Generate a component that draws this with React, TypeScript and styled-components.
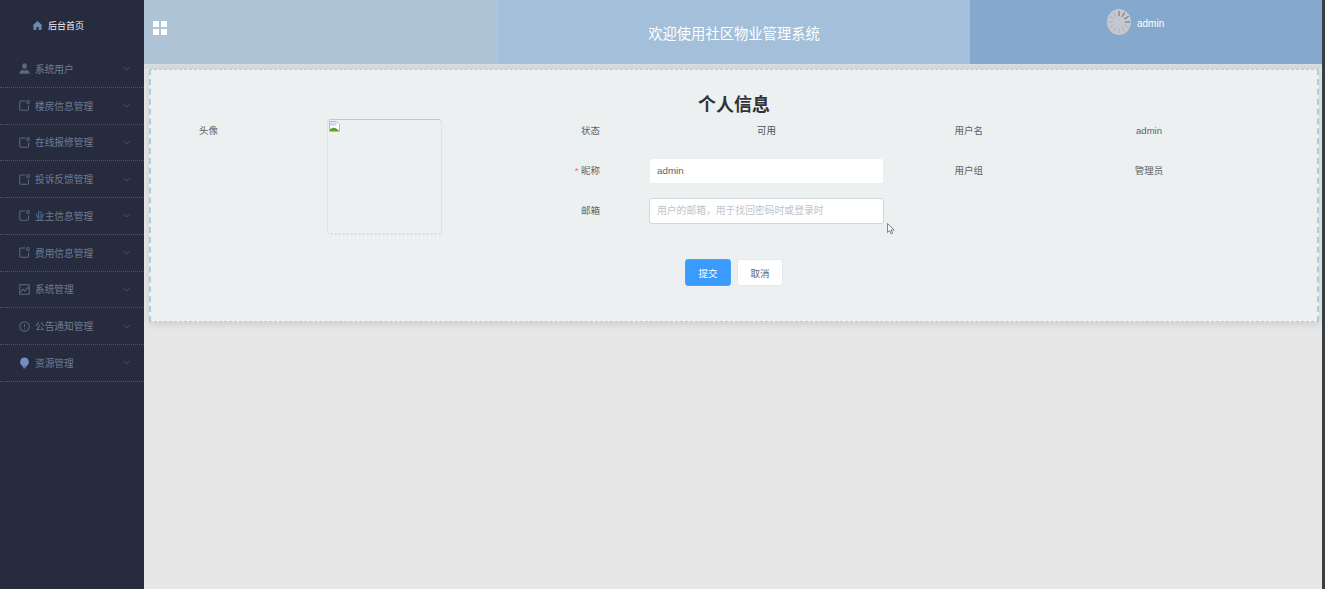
import styled, { createGlobalStyle } from "styled-components";

const GlobalStyle = createGlobalStyle`
    html, body {
        margin: 0;
        padding: 0;
        height: 100%;
        background-color: #3a3d42;
        font-family: "Liberation Sans", "Noto Sans CJK SC", sans-serif;
    }
    #root {
        height: 100%;
    }
`;

const NewsIcon = () => (
    <svg width="11" height="11" viewBox="0 0 15 15" fill="none" stroke="currentColor" strokeWidth="1.4">
        <path d="M8.500 1.500H2.500a1.500 1.500 0 0 0-1.500 1.500v9.500a1.500 1.500 0 0 0 1.500 1.500h9a1.500 1.500 0 0 0 1.500-1.500V7" />
        <circle cx="12.300" cy="2.700" r="1.900" />
    </svg>
);

const UserIcon = () => (
    <svg width="11" height="11" viewBox="0 0 15 15" fill="currentColor">
        <path d="M7.500.5c2.100 0 3.300 1.500 3.300 3.500 0 2.100-1.300 4-3.300 4s-3.300-1.900-3.300-4c0-2 1.200-3.500 3.300-3.500z" />
        <path d="M.5 14.500c0-3 1.900-4.700 4.500-5.400l2.500 1.500 2.500-1.500c2.600.7 4.500 2.400 4.500 5.400z" />
    </svg>
);

const PictureIcon = () => (
    <svg width="11" height="11" viewBox="0 0 15 15" fill="none" stroke="currentColor" strokeWidth="1.4">
        <rect x="1" y="1" width="13" height="13" />
        <path d="M1.500 11.500l4-4.500 2.500 2.500 4-5 1.500 2" />
    </svg>
);

const InfoIcon = () => (
    <svg width="11" height="11" viewBox="0 0 15 15" fill="none" stroke="currentColor" strokeWidth="1.4">
        <circle cx="7.500" cy="7.500" r="6.500" />
        <path d="M7.500 4v4.500M7.500 10v1.200" />
    </svg>
);

const BulbIcon = () => (
    <svg width="11" height="12" viewBox="0 0 15 16" fill="#7390c4">
        <path d="M7.500.5a6 6 0 0 1 3.200 11l-.5 1.500H4.800l-.5-1.500A6 6 0 0 1 7.500.5z" />
        <rect x="5.300" y="13.800" width="4.400" height="1.500" rx="0.600" />
    </svg>
);

const HomeIcon = () => (
    <svg width="11" height="11" viewBox="0 0 11 11" fill="currentColor">
        <path d="M5.500 1L10.500 5.500 9.500 5.800V10H6.600V7H4.400v3H1.500V5.800L.5 5.500z" />
    </svg>
);

const Chevron = () => (
    <svg width="7" height="5" viewBox="0 0 7 5" fill="none" stroke="currentColor" strokeWidth="0.700">
        <path d="M0.500 1l3 3 3-3" />
    </svg>
);

const Spinner = () => (
    <svg width="24" height="26" viewBox="0 0 24 26">
        <ellipse cx="12" cy="13" rx="12" ry="13" fill="#c5c8d0" />
        {Array.from({ length: 12 }).map((_, i) => (
            <line
                key={i}
                x1="12"
                y1="2"
                x2="12"
                y2="7"
                stroke={i < 4 ? "#55575c" : "#a8aab0"}
                strokeWidth="0.800"
                transform={`rotate(${i * 30} 12 13)`}
            />
        ))}
    </svg>
);

const BrokenImage = () => (
    <svg width="11" height="11" viewBox="0 0 11 11">
        <path d="M.5.5h7l3 3v7h-10z" fill="#ffffff" stroke="#a6a9ad" strokeWidth="0.800" />
        <path d="M1 4.500h6.500v-3H1z" fill="#c6daf4" />
        <path d="M1 10V8.500c2-2.200 4.500-2.500 7-.5l2 1.800V10z" fill="#5aa02c" />
    </svg>
);

const Cursor = () => (
    <svg width="9" height="12" viewBox="0 0 9 12">
        <path d="M.500.500v9l2.200-2 1.500 3.500 1.500-.700-1.500-3.300h3z" fill="#f4f6f6" stroke="#55585c" strokeWidth="0.700" />
    </svg>
);

const menus = [
    { label: "系统用户", icon: <UserIcon /> },
    { label: "楼房信息管理", icon: <NewsIcon /> },
    { label: "在线报修管理", icon: <NewsIcon /> },
    { label: "投诉反馈管理", icon: <NewsIcon /> },
    { label: "业主信息管理", icon: <NewsIcon /> },
    { label: "费用信息管理", icon: <NewsIcon /> },
    { label: "系统管理", icon: <PictureIcon /> },
    { label: "公告通知管理", icon: <InfoIcon /> },
    { label: "资源管理", icon: <BulbIcon /> },
];

export default function App() {
    return (
        <>
            <GlobalStyle />
            <Page>
                <Sidebar>
                    <HomeLink>
                        <HomeIcon />
                        <span>后台首页</span>
                    </HomeLink>
                    {menus.map((menu) => (
                        <MenuItem key={menu.label}>
                            <MenuIcon>{menu.icon}</MenuIcon>
                            <MenuLabel>{menu.label}</MenuLabel>
                            <Chevron />
                        </MenuItem>
                    ))}
                </Sidebar>
                <Main>
                    <Header>
                        <HeaderLeft>
                            <GridButton>
                                <i />
                                <i />
                                <i />
                                <i />
                            </GridButton>
                        </HeaderLeft>
                        <HeaderCenter>欢迎使用社区物业管理系统</HeaderCenter>
                        <HeaderRight>
                            <Spinner />
                            <span>admin</span>
                        </HeaderRight>
                    </Header>
                    <Content>
                        <Card>
                            <Title>个人信息</Title>
                            <FormGrid>
                                <Label>头像</Label>
                                <Avatar>
                                    <BrokenImage />
                                </Avatar>
                                <FieldLabel>状态</FieldLabel>
                                <Value>可用</Value>
                                <SideLabel>用户名</SideLabel>
                                <SideValue>admin</SideValue>

                                <FieldLabel>
                                    <Required>*</Required> 昵称
                                </FieldLabel>
                                <Control>
                                    <Input defaultValue="admin" />
                                </Control>
                                <SideLabel>用户组</SideLabel>
                                <SideValue>管理员</SideValue>

                                <FieldLabel>邮箱</FieldLabel>
                                <Control>
                                    <Input $outlined placeholder="用户的邮箱，用于找回密码时或登录时" />
                                    <CursorMark>
                                        <Cursor />
                                    </CursorMark>
                                </Control>
                            </FormGrid>
                            <Actions>
                                <Button $primary>提交</Button>
                                <Button>取消</Button>
                            </Actions>
                        </Card>
                    </Content>
                </Main>
            </Page>
        </>
    );
}

const Page = styled.div`
    display: flex;
    width: 1322px;
    height: 589px;
    overflow: hidden;
`;

const Sidebar = styled.aside`
    flex: 0 0 144px;
    background-color: #262b3d;
`;

const HomeLink = styled.div`
    display: flex;
    align-items: center;
    gap: 5px;
    height: 50px;
    margin-bottom: 1px;
    padding-left: 32px;
    box-sizing: border-box;
    font-size: 9px;
    color: #f2f4f8;

    svg {
        color: #6f88ad;
    }
`;

const MenuItem = styled.div`
    display: flex;
    align-items: center;
    height: 36.75px;
    box-sizing: border-box;
    padding: 0 14px 0 19px;
    border-bottom: 1px dotted #51555f;
    color: #7288ac;

    svg:last-child {
        color: #586881;
    }
`;

const MenuIcon = styled.span`
    display: flex;
    width: 16px;
`;

const MenuLabel = styled.span`
    flex: 1;
    font-size: 9.7px;
    color: #6d7f98;
`;

const Main = styled.main`
    flex: 1;
    display: flex;
    flex-direction: column;
    background-color: #e7e7e8;
`;

const Header = styled.header`
    display: flex;
    height: 64px;
    color: #ffffff;
`;

const HeaderLeft = styled.div`
    flex: 0 0 354px;
    background-color: #b0c4d7;
    box-sizing: border-box;
    padding: 21px 0 0 9px;
`;

const GridButton = styled.div`
    display: grid;
    grid-template-columns: 6px 6px;
    grid-auto-rows: 6px;
    gap: 2px;

    i {
        background-color: #ffffff;
    }
`;

const HeaderCenter = styled.div`
    flex: 0 0 472px;
    display: flex;
    align-items: center;
    justify-content: center;
    background-color: #a3bfd9;
    font-size: 14.3px;
`;

const HeaderRight = styled.div`
    flex: 1;
    display: flex;
    align-items: flex-start;
    gap: 6px;
    box-sizing: border-box;
    padding: 9px 0 0 137px;
    background-color: #84a9cd;
    font-size: 10px;

    span {
        margin-top: 9px;
    }
`;

const Content = styled.div`
    flex: 1;
    padding: 5px 3px 0 5px;
    background: linear-gradient(#d7dde0 0, #d7dde0 5px, transparent 5px);
`;

const Card = styled.section`
    box-sizing: border-box;
    height: 253px;
    padding-top: 25px;
    background-color: #ecf0f1;
    border-style: dashed;
    border-color: #a9cfdc;
    border-width: 1px 2px;
    box-shadow: 0 2px 8px rgba(0, 0, 0, 0.12);
`;

const Title = styled.h2`
    margin: 0 0 3px;
    font-size: 18px;
    line-height: 20px;
    font-weight: 700;
    text-align: center;
    color: #333333;
`;

const FormGrid = styled.div`
    display: grid;
    grid-template-columns: 67px 108px 116px 159px 283px 99px 300px;
    grid-auto-rows: 26px;
    row-gap: 14px;
    font-size: 9.5px;
    color: #606266;
    line-height: 26px;
`;

const Label = styled.div`
    grid-column: 1;
    text-align: right;
`;

const Avatar = styled.div`
    grid-column: 3;
    grid-row: 1 / span 3;
    height: 116px;
    margin: 1px 0 0 1px;
    box-sizing: border-box;
    border: 1px dotted #d2d4d6;
    border-top: 1px solid #c4c6c8;
    border-bottom: 2px dotted #d8dadc;
    border-radius: 4px;
    line-height: 0;
    padding: 1px;
`;

const FieldLabel = styled.div`
    grid-column: 4;
    text-align: right;
    padding-right: 1px;
`;

const Required = styled.span`
    color: #f56c6c;
`;

const Value = styled.div`
    grid-column: 5;
    padding-left: 48px;
    text-align: center;
    color: #4f5154;
`;

const SideLabel = styled.div`
    grid-column: 6;
    text-align: right;
`;

const SideValue = styled.div`
    grid-column: 7;
    padding-left: 32px;
    text-align: center;
`;

const Control = styled.div`
    position: relative;
    grid-column: 5;
    padding-left: 48px;
`;

const Input = styled.input<{ $outlined?: boolean }>`
    box-sizing: border-box;
    width: 235px;
    height: 26px;
    padding: 0 7px;
    display: block;
    font: inherit;
    font-size: 9.8px;
    color: #606266;
    background-color: #ffffff;
    border: 1px solid ${(p) => (p.$outlined ? "#d3d6da" : "#eceef0")};
    border-radius: 3px;
    outline: 0;

    &::placeholder {
        color: #c0c4cc;
    }
`;

const CursorMark = styled.span`
    position: absolute;
    left: 286px;
    top: 25px;
    line-height: 0;
`;

const Actions = styled.div`
    display: flex;
    justify-content: center;
    gap: 6px;
    margin-top: 35px;
`;

const Button = styled.button<{ $primary?: boolean }>`
    width: 46px;
    height: 27px;
    padding: 0;
    font: inherit;
    font-size: 9.5px;
    color: ${(p) => (p.$primary ? "#ffffff" : "#606266")};
    background-color: ${(p) => (p.$primary ? "#3a9bfd" : "#ffffff")};
    border: 1px solid ${(p) => (p.$primary ? "#4aa2fb" : "#e4e7ed")};
    border-radius: 3px;
`;
